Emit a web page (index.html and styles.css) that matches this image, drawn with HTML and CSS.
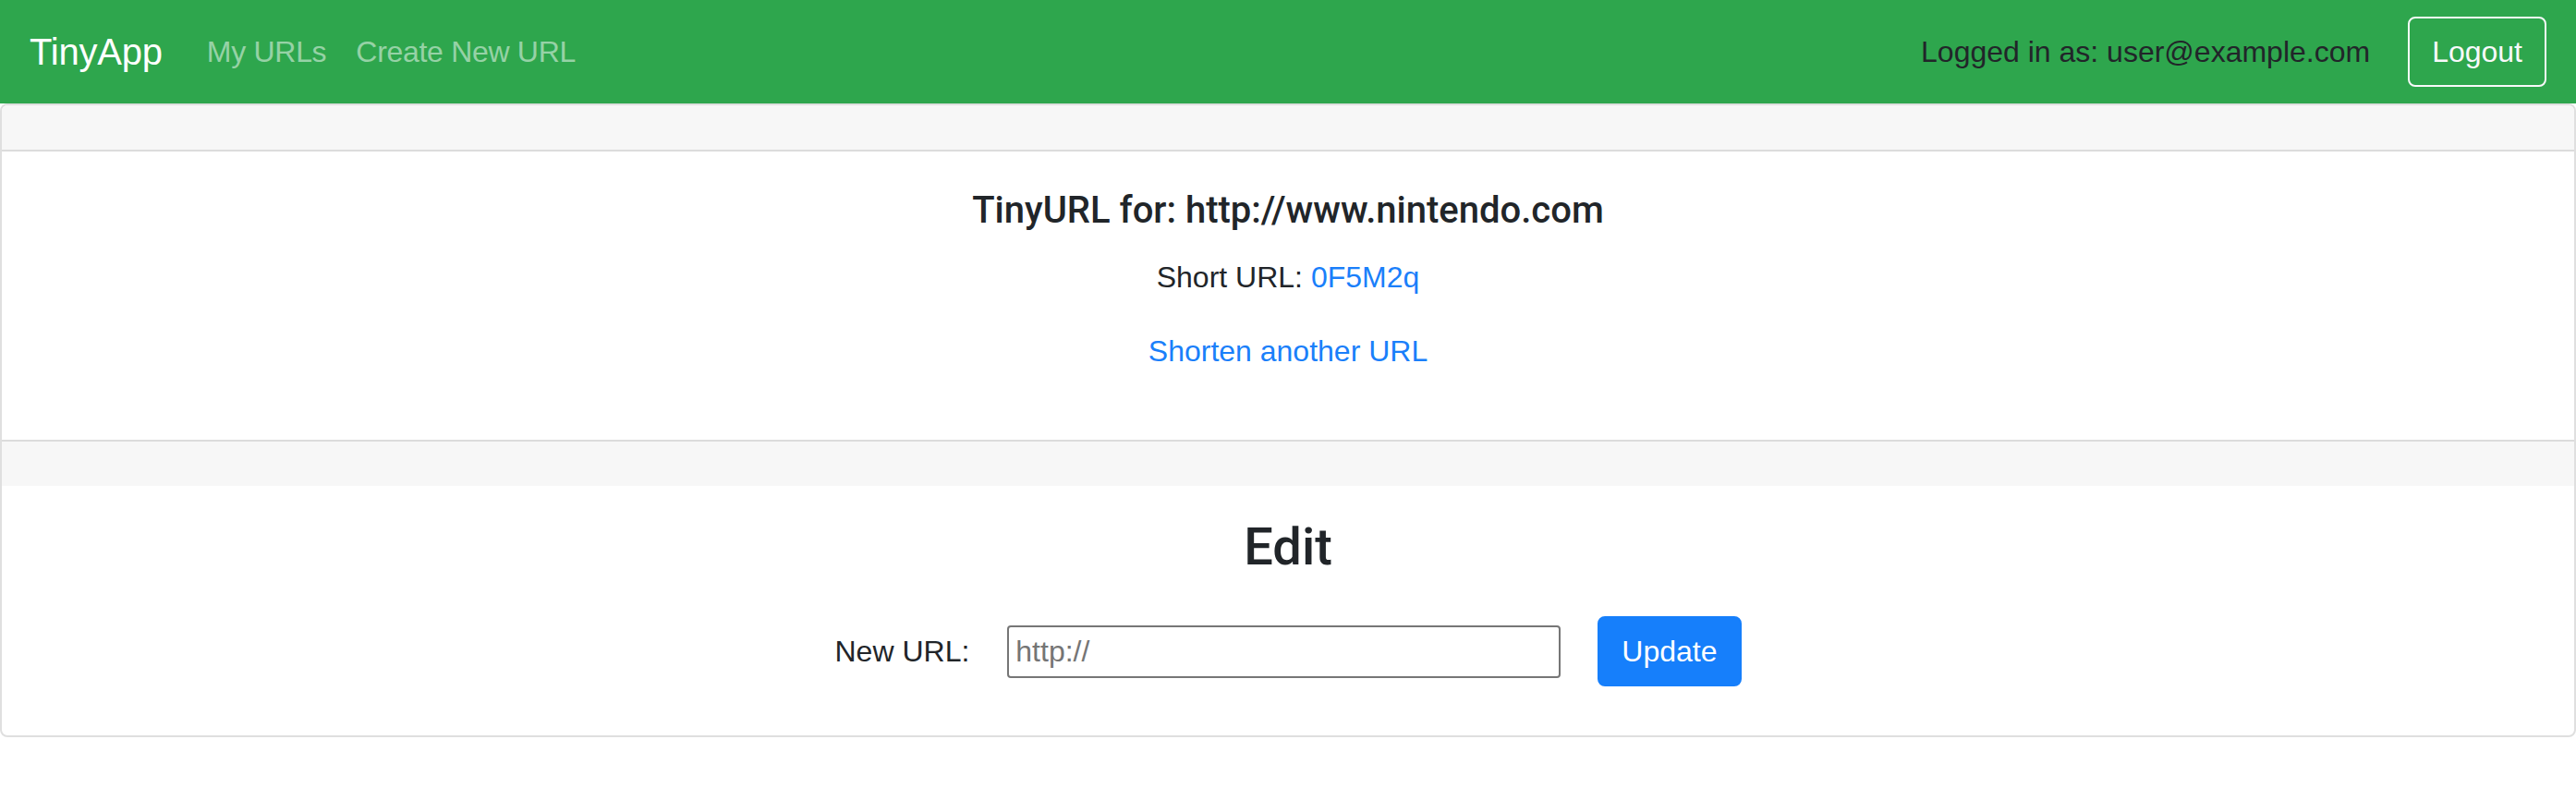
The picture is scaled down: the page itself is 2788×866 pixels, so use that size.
FILE: index.html
```html
<!DOCTYPE html>
<html lang="en">
<head>
<meta charset="utf-8">
<title>TinyApp</title>
<link rel="stylesheet" href="styles.css">
</head>
<body>
<nav class="navbar">
  <a class="brand" href="#">TinyApp</a>
  <ul class="nav">
    <li><a class="nav-link" href="#">My URLs</a></li>
    <li><a class="nav-link" href="#">Create New URL</a></li>
  </ul>
  <div class="nav-right">
    <span class="nav-text">Logged in as: user@example.com</span>
    <form class="logout-form">
      <button type="button" class="btn btn-outline">Logout</button>
    </form>
  </div>
</nav>

<main class="card">
  <div class="card-header"></div>
  <div class="card-body">
    <h5 class="card-title">TinyURL for: http://www.nintendo.com</h5>
    <p class="card-text">Short URL: <a href="#">0F5M2q</a></p>
    <p class="card-text"><a href="#">Shorten another URL</a></p>
  </div>
  <div class="card-footer"></div>
  <div class="edit-body">
    <h3 class="edit-title">Edit</h3>
    <form class="edit-form">
      <label class="edit-label" for="longURL">New URL:</label>
      <input class="edit-input" id="longURL" type="text" placeholder="http://">
      <button type="button" class="btn btn-primary">Update</button>
    </form>
  </div>
</main>
</body>
</html>
```

FILE: styles.css
```css
* {
  box-sizing: border-box;
}

html, body {
  margin: 0;
  padding: 0;
  background: #ffffff;
}

body {
  font-family: "Liberation Sans", Arial, sans-serif;
  font-size: 32px;
  line-height: 1.5;
  color: #212529;
}

a {
  text-decoration: none;
}

/* Navbar */
.navbar {
  display: flex;
  align-items: center;
  height: 112px;
  padding: 16px 32px;
  background: #2ea64d;
}

.brand {
  font-size: 40px;
  line-height: 60px;
  padding: 10px 0;
  margin-right: 32px;
  color: #ffffff;
  letter-spacing: -0.2px;
}

.nav {
  display: flex;
  list-style: none;
  margin: 0;
  padding: 0;
}

.nav-link {
  display: block;
  padding: 16px 16px;
  color: rgba(255, 255, 255, 0.5);
  letter-spacing: -0.3px;
}

.nav-right {
  margin-left: auto;
  display: flex;
  align-items: center;
  gap: 41px;
}

.nav-text {
  color: #212529;
  padding: 16px 0;
}

.logout-form {
  margin: 0;
}

.btn {
  font-family: inherit;
  font-size: 32px;
  line-height: 48px;
  padding: 12px 24px;
  border-radius: 8px;
  border: 2px solid transparent;
  cursor: pointer;
}

.btn-outline {
  background: transparent;
  color: #f8f9fa;
  border-color: #f8f9fa;
}

.btn-primary {
  background: #167ffb;
  border-color: #167ffb;
  color: #ffffff;
}

/* Card */
.card {
  display: block;
  border: 2px solid #dfdfdf;
  border-radius: 8px;
  overflow: hidden;
  background: #ffffff;
}

.card-header {
  height: 50px;
  background: #f7f7f7;
  border-bottom: 2px solid #dcdcdc;
}

.card-body {
  padding: 40px;
  text-align: center;
}

.card-title {
  margin: 0 0 24px;
  font-family: Roboto, "Liberation Sans", sans-serif;
  font-size: 40px;
  line-height: 48px;
  font-weight: 500;
}

.card-text {
  margin: 0 0 32px;
}

.card-text a {
  color: #1a7ffa;
}

.card-footer {
  height: 50px;
  background: #f7f7f7;
  border-top: 2px solid #dcdcdc;
}

.edit-body {
  padding: 33px 40px 53px;
  text-align: center;
}

.edit-title {
  margin: 0 0 41px;
  font-family: Roboto, "Liberation Sans", sans-serif;
  font-size: 56px;
  line-height: 67px;
  font-weight: 500;
}

.edit-form {
  display: flex;
  justify-content: center;
  align-items: center;
  gap: 41px;
  margin: 0;
}

.edit-form .btn {
  margin-left: -1px;
}

.edit-label {
  color: #212529;
}

.edit-input {
  width: 599px;
  height: 57px;
  padding: 0 7px;
  font-family: inherit;
  font-size: 32px;
  color: #212529;
  border: 2px solid #767676;
  border-radius: 4px;
  background: #ffffff;
}

.edit-input::placeholder {
  color: #757575;
}
```
